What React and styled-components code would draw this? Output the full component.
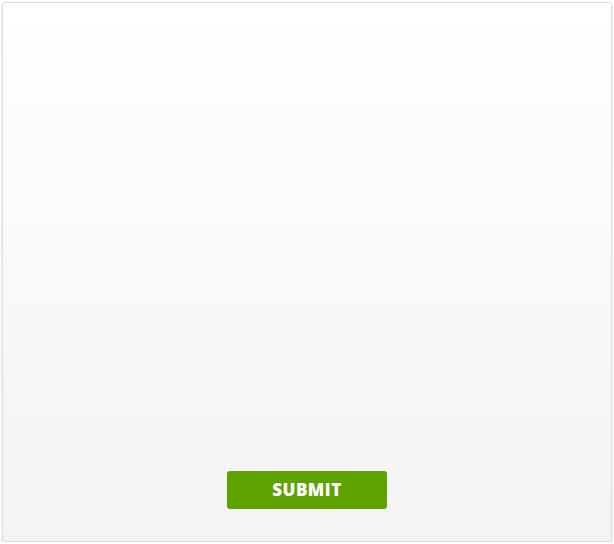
import React from "react";
import styled, { createGlobalStyle } from "styled-components";

const GlobalStyle = createGlobalStyle`
  html, body {
    margin: 0;
    padding: 0;
    background: #fff;
  }
  body {
    font-family: "Open Sans", "Liberation Sans", sans-serif;
  }
`;

const Page = styled.div`
  padding: 2px 2px 0 2px;
`;

const Card = styled.form`
  box-sizing: border-box;
  width: 610px;
  height: 540px;
  border: 1px solid #dedede;
  border-radius: 3px;
  background: linear-gradient(to bottom, #ffffff 0%, #f3f3f3 100%);
  box-shadow: 0 1px 2px rgba(0, 0, 0, 0.22);
  display: flex;
  flex-direction: column;
  justify-content: flex-end;
  align-items: center;
  padding-bottom: 32px;
`;

const SubmitButton = styled.button`
  width: 160px;
  height: 38px;
  padding: 0;
  border: none;
  border-radius: 3px;
  background-color: #5ea200;
  color: #fff;
  font-family: "Open Sans", "Liberation Sans", sans-serif;
  font-weight: 800;
  font-size: 17px;
  line-height: 38px;
  letter-spacing: 0.5px;
  text-transform: uppercase;
  cursor: pointer;
`;

function App() {
  return (
    <>
      <GlobalStyle />
      <Page>
        <Card onSubmit={(e) => e.preventDefault()}>
          <SubmitButton type="submit">Submit</SubmitButton>
        </Card>
      </Page>
    </>
  );
}

export default App;
